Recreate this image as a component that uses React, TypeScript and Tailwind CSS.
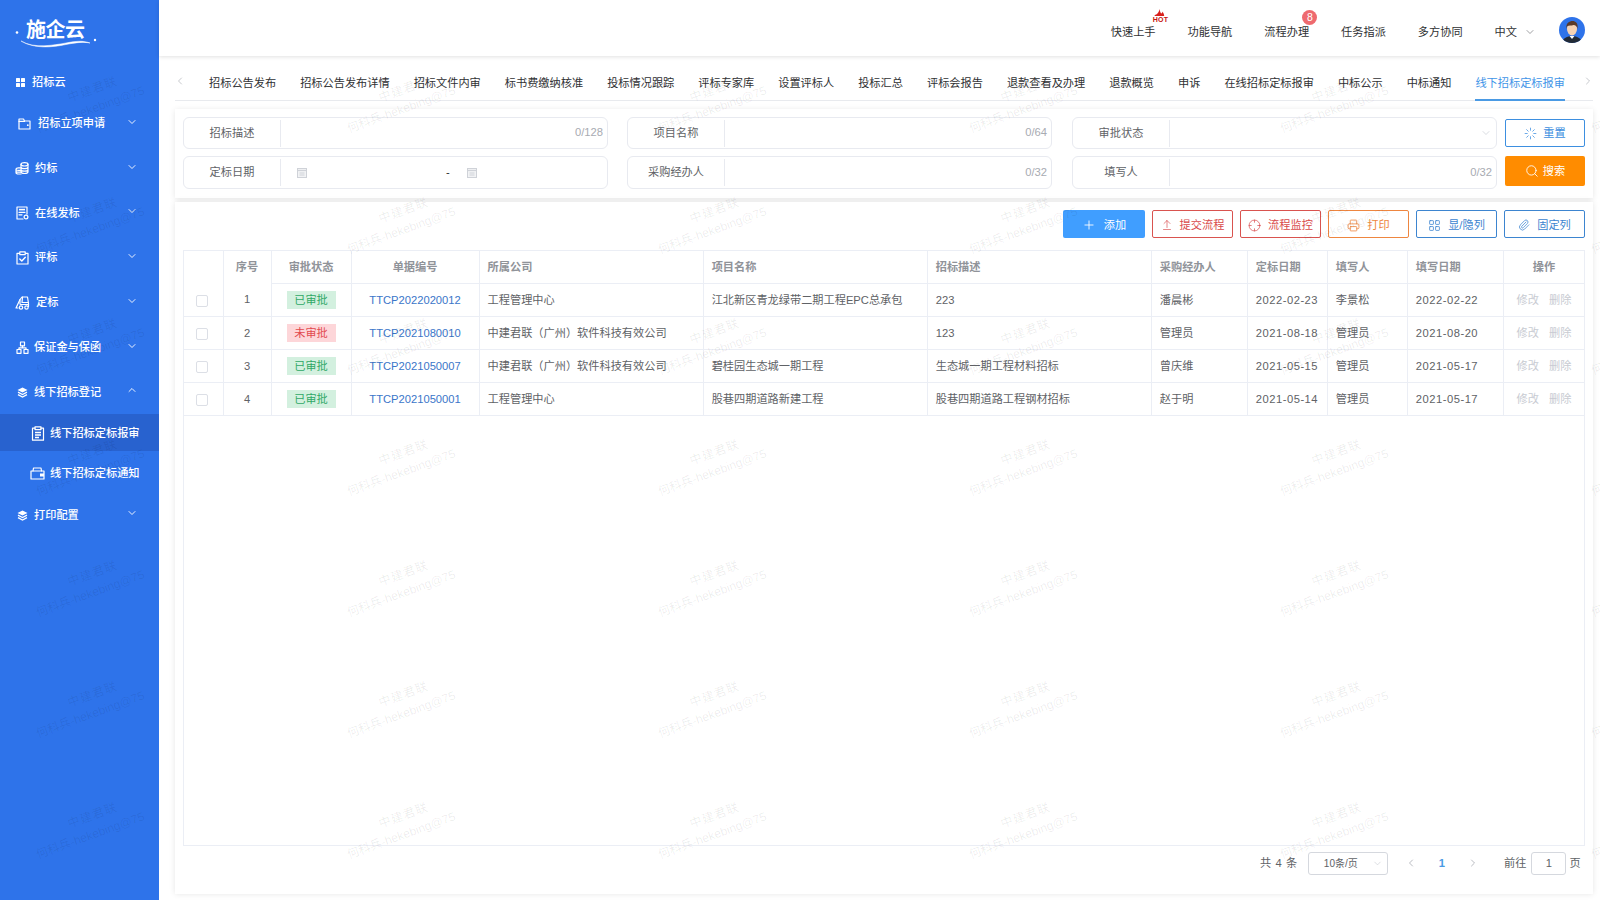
import React from "react";
import {
  ChevronDown, ChevronUp, ChevronLeft, ChevronRight, Plus, ArrowUpFromLine, Crosshair, Printer, LayoutGrid, Paperclip, Search, Loader,
} from "lucide-react";

const FONT = "font-['Liberation_Sans','Noto_Sans_CJK_SC',sans-serif]";

function Cal() {
  return (
    <svg width="10" height="10" viewBox="0 0 10 10" className="shrink-0">
      <rect x="0.5" y="0.5" width="9" height="9" fill="#f2f3f5" stroke="#cfd2d8" />
      <path d="M0.500 2.500h9" stroke="#cfd2d8" strokeWidth="1.2" />
      <path d="M2.500 5h5M2.500 7h5" stroke="#cfd2d8" strokeWidth="1" />
    </svg>
  );
}

function Grid4() {
  return (
    <svg width="9" height="9" viewBox="0 0 9 9" className="shrink-0">
      <rect x="0" y="0" width="4" height="4" rx="0.5" fill="#fff" />
      <rect x="5" y="0" width="4" height="4" rx="0.5" fill="#fff" />
      <rect x="0" y="5" width="4" height="4" rx="0.5" fill="#fff" />
      <rect x="5" y="5" width="4" height="4" rx="0.5" fill="#fff" />
    </svg>
  );
}

const stroke = { fill: "none", stroke: "#fff", strokeWidth: 1.2, strokeLinejoin: "round" as const, strokeLinecap: "round" as const };

function IFolder() {
  return (
    <svg width="13" height="12" viewBox="0 0 13 12" className="shrink-0">
      <path d="M1 1h4.500l1 2H12v8H1z" {...stroke} />
      <path d="M1 3.400h5.500" {...stroke} />
      <circle cx="9.800" cy="7.200" r="0.900" fill="#fff" />
    </svg>
  );
}

function ICoins() {
  return (
    <svg width="14" height="13" viewBox="0 0 14 13" className="shrink-0">
      <ellipse cx="9.500" cy="2.300" rx="3.500" ry="1.700" {...stroke} />
      <path d="M6 2.300v7.500c0 .9 1.600 1.700 3.500 1.700s3.500-.8 3.500-1.700V2.300M6 5c0 .9 1.600 1.700 3.500 1.700S13 5.900 13 5M6 7.500c0 .9 1.600 1.700 3.500 1.700S13 8.400 13 7.500" {...stroke} />
      <path d="M6 5.800H3.500C2 5.800 1 6.500 1 7.300v3.200c0 .9 1.100 1.500 2.500 1.500H6M1 8.900c0 .8 1.100 1.300 2.500 1.300H6M1 7.300c0 .7 1.100 1.100 2.500 1.100H6" {...stroke} />
    </svg>
  );
}

function IDoc() {
  return (
    <svg width="13" height="14" viewBox="0 0 13 14" className="shrink-0">
      <path d="M7 13H1V1h10v7" {...stroke} />
      <path d="M3 3.600h6" stroke="#fff" strokeWidth="1.600" />
      <path d="M3 6.300h6M3 8.800h3" {...stroke} />
      <circle cx="10" cy="11" r="1.900" {...stroke} />
    </svg>
  );
}

function ICheck() {
  return (
    <svg width="13" height="14" viewBox="0 0 13 14" className="shrink-0">
      <path d="M3.500 2.300H1V13h11V2.300H9.500" {...stroke} />
      <rect x="3.800" y="0.800" width="5.400" height="2.800" {...stroke} />
      <path d="M3.800 8l2 2 3.500-3.800" {...stroke} strokeWidth={1.4} />
    </svg>
  );
}

function IFork() {
  return (
    <svg width="17" height="14" viewBox="0 0 17 14" className="shrink-0">
      <path d="M5 8V3.500L7 1h5.500l1 6.500v3" {...stroke} />
      <path d="M7.500 1.200L7 6.500h6.200" {...stroke} />
      <path d="M5 3.500L1 12h2M5.500 8.500h8" {...stroke} />
      <circle cx="6" cy="11.500" r="1.700" {...stroke} />
      <circle cx="11.500" cy="11.500" r="1.700" {...stroke} />
    </svg>
  );
}

function INet() {
  return (
    <svg width="13" height="13" viewBox="0 0 13 13" className="shrink-0">
      <rect x="4.500" y="1" width="4" height="3.800" {...stroke} />
      <rect x="1" y="8.500" width="4" height="3.800" {...stroke} />
      <rect x="8" y="8.500" width="4" height="3.800" {...stroke} />
      <path d="M6.500 4.800v2H3v1.700M6.500 6.800H10v1.700" {...stroke} />
    </svg>
  );
}

function ILayers() {
  return (
    <svg width="11" height="11" viewBox="0 0 11 11" className="shrink-0">
      <path d="M5.500 0.500L10.500 3 5.500 5.500 0.500 3z" fill="#fff" />
      <path d="M1 5.200l4.500 2.300L10 5.200M1 7.600l4.500 2.400L10 7.600" fill="none" stroke="#fff" strokeWidth="1.300" />
    </svg>
  );
}

function IClip() {
  return (
    <svg width="14" height="15" viewBox="0 0 14 15" className="shrink-0">
      <path d="M4 2.200H1.500v12h11v-12H10" {...stroke} />
      <rect x="4" y="0.800" width="6" height="2.800" {...stroke} />
      <path d="M4 6.500h6M4 9h6M4 11.500h4" stroke="#fff" strokeWidth="1.300" />
    </svg>
  );
}

function IWallet() {
  return (
    <svg width="15" height="13" viewBox="0 0 15 13" className="shrink-0">
      <path d="M1 4h13v8H1z" {...stroke} />
      <path d="M3 4l.5-3h7.500l.5 3" {...stroke} />
      <rect x="10" y="6.500" width="4" height="3" fill="#fff" />
    </svg>
  );
}

function MenuRow({ icon, label, up, cls }: { icon: React.ReactNode; label: string; up?: boolean; cls: string }) {
  return (
    <div className={`flex items-center relative text-white font-medium ${cls}`}>
      {icon}
      <span className="whitespace-nowrap">{label}</span>
      <span className="absolute left-[126px] top-1/2 -translate-y-[8px]">
        {up ? <ChevronUp size={12} strokeWidth={1.8} /> : <ChevronDown size={12} strokeWidth={1.8} />}
      </span>
    </div>
  );
}

function Sidebar() {
  return (
    <aside className="w-[159px] shrink-0 bg-[#2e73ea] text-[11.2px] text-white">
      <div className="h-[63px] relative flex items-start pt-[16px] pl-[26px]">
        <span className="text-[20px] leading-[28px] font-bold tracking-[-0.5px] text-white">施企云</span>
        <svg className="absolute left-[14px] top-[28px]" width="84" height="20" viewBox="0 0 84 20">
          <circle cx="3" cy="4.500" r="1.300" fill="#fff" />
          <circle cx="81" cy="12" r="1.200" fill="#fff" />
          <path d="M7 13 C 20 21, 40 17, 52 15 C 60 13.500, 68 12, 76 15 C 68 13.500, 60 15, 52 16.500 C 38 19.500, 20 21, 7 13Z" fill="#fff" stroke="#fff" strokeWidth="0.500" />
        </svg>
      </div>
      <div className="h-[38px] flex items-center pl-[16px] gap-[7px] font-medium">
        <Grid4 />
        <span>招标云</span>
      </div>
      <MenuRow cls="h-[45px] pl-[18px] gap-[7px]" icon={<IFolder />} label="招标立项申请" />
      <MenuRow cls="h-[45px] pl-[15px] gap-[6px]" icon={<ICoins />} label="约标" />
      <MenuRow cls="h-[44px] pl-[16px] gap-[6px]" icon={<IDoc />} label="在线发标" />
      <MenuRow cls="h-[45px] pl-[16px] gap-[6px]" icon={<ICheck />} label="评标" />
      <MenuRow cls="h-[45px] pl-[15px] gap-[4px]" icon={<IFork />} label="定标" />
      <MenuRow cls="h-[45px] pl-[16px] gap-[5px]" icon={<INet />} label="保证金与保函" />
      <MenuRow up cls="h-[44px] pl-[17px] gap-[6px]" icon={<ILayers />} label="线下招标登记" />
      <div className="h-[37px] bg-[#2862cf] flex items-center pl-[31px] pt-[2px] gap-[5px] font-medium">
        <IClip />
        <span>线下招标定标报审</span>
      </div>
      <div className="h-[44px] flex items-center pl-[30px] gap-[5px] font-medium">
        <IWallet />
        <span>线下招标定标通知</span>
      </div>
      <MenuRow cls="h-[40px] pl-[17px] gap-[6px]" icon={<ILayers />} label="打印配置" />
    </aside>
  );
}

function Avatar() {
  return (
    <svg width="26" height="26" viewBox="0 0 26 26" className="shrink-0">
      <defs>
        <clipPath id="av"><circle cx="13" cy="13" r="13" /></clipPath>
      </defs>
      <g clipPath="url(#av)">
        <rect width="26" height="26" fill="#2e73ea" />
        <path d="M3 26c1-5 5-7 10-7s9 2 10 7z" fill="#222a36" />
        <path d="M10.500 19l2.500 3 2.500-3z" fill="#fff" />
        <ellipse cx="13" cy="12" rx="5" ry="6.500" fill="#f6d3b5" />
        <path d="M7.500 12c-1-6 3-8 6-8s6 2 5 8c-.5-3-2-4-4-4-2 .8-5 .5-6 1-.6.6-.8 2-1 3z" fill="#5a3a2a" />
      </g>
    </svg>
  );
}

function Header() {
  const items = ["快速上手", "功能导航", "流程办理", "任务指派", "多方协同"];
  return (
    <header className="h-[56px] shrink-0 bg-white shadow-[0_1px_4px_rgba(0,0,0,0.12)] flex items-center justify-end pr-[15px] text-[11.2px] text-[#303133] relative z-10">
      <div className="flex items-center gap-[32px] pt-[9px]">
        {items.map((t, i) => (
          <div key={t} className="relative whitespace-nowrap leading-[16px]">
            {t}
            {i === 0 && (
              <div className="absolute left-[40px] -top-[15px] w-[20px] h-[16px]">
                <svg width="20" height="13" viewBox="0 0 20 13" className="absolute left-0 top-0">
                  <path d="M8.500 0c.4 2.500 1 3.500 1.600 4.600C11 4 11.500 3.400 11.500 2.500c1 1.500 1.700 3 1.700 4.500H3.500C3.500 6 5 5.500 6 5c1.200-1 2.200-3 2.500-5z" fill="#d8201c" />
                </svg>
                <span className="absolute left-[2px] top-[7px] text-[7px] leading-[7px] font-bold text-[#c81410] tracking-[0.2px]">HOT</span>
              </div>
            )}
            {i === 2 && (
              <span className="absolute left-[38px] -top-[14px] w-[15px] h-[15px] rounded-full bg-[#ee6a6f] text-white text-[10.500px] leading-[15px] text-center">8</span>
            )}
          </div>
        ))}
        <div className="flex items-center gap-[7px] whitespace-nowrap">
          <span>中文</span>
          <ChevronDown size={12} strokeWidth={1.2} className="text-[#606266]" />
        </div>
      </div>
      <div className="ml-[23px] mt-[3px]"><Avatar /></div>
    </header>
  );
}

function Tabs() {
  const tabs = ["招标公告发布", "招标公告发布详情", "招标文件内审", "标书费缴纳核准", "投标情况跟踪", "评标专家库", "设置评标人", "投标汇总", "评标会报告", "退款查看及办理", "退款概览", "申诉", "在线招标定标报审", "中标公示", "中标通知"];
  return (
    <div className="h-[45px] shrink-0 ml-[16px] mr-[7px] flex items-stretch border-b border-[#e8eaee] text-[11.2px] text-[#303133] relative">
      <ChevronLeft size={12} strokeWidth={1.3} className="absolute left-[-1px] top-[19px] text-[#a8abb2]" />
      <div className="pl-[34px] flex gap-[24px] items-stretch">
        {tabs.map((t) => (
          <div key={t} className="whitespace-nowrap pt-[19px]">{t}</div>
        ))}
        <div className="whitespace-nowrap pt-[19px] text-[#3f95e8] border-b-[2px] border-[#4a9ae4] h-[45px]">线下招标定标报审</div>
      </div>
      <ChevronRight size={12} strokeWidth={1.3} className="absolute -right-[1px] top-[19px] text-[#a8abb2]" />
    </div>
  );
}

function Field({ label, children, cls }: { label: string; children: React.ReactNode; cls: string }) {
  return (
    <div className={`w-[425px] border border-[#e8eaf0] rounded-[6px] flex items-center bg-white ${cls}`}>
      <div className="w-[97px] h-[27px] shrink-0 border-r border-[#e8eaf0] text-center leading-[27px] text-[#606266]">{label}</div>
      <div className="flex-1 flex items-center px-[4px] text-[#a8abb2] -mt-[1px]">{children}</div>
    </div>
  );
}

function Filter() {
  return (
    <section className="ml-[16px] mr-[7px] mt-[8px] h-[89px] shrink-0 bg-white shadow-[0_1px_6px_rgba(0,0,0,0.1)] pl-[8px] pr-[8px] pt-[8px] text-[11.2px] flex flex-col gap-[7px]">
      <div className="flex items-start gap-[19px]">
        <Field cls="h-[32px]" label="招标描述"><span className="ml-auto">0/128</span></Field>
        <Field cls="h-[32px]" label="项目名称"><span className="ml-auto">0/64</span></Field>
        <Field cls="h-[32px] ml-[1px]" label="审批状态"><ChevronDown size={12} strokeWidth={1.2} className="ml-auto text-[#c0c4cc]" /></Field>
        <button className="w-[80px] h-[28px] mt-[2px] -ml-[11px] rounded-[2px] border border-[#3d8fe0] text-[#3d8fe0] flex items-center justify-center gap-[6px] bg-white">
          <Loader size={13} strokeWidth={1.4} />
          <span>重置</span>
        </button>
      </div>
      <div className="flex items-start gap-[19px]">
        <div className="w-[425px] h-[33px] border border-[#e8eaf0] rounded-[6px] flex items-center bg-white">
          <div className="w-[97px] h-[27px] shrink-0 border-r border-[#e8eaf0] text-center leading-[27px] text-[#606266]">定标日期</div>
          <div className="ml-[16px]"><Cal /></div>
          <span className="ml-[139px] text-[#303133]">-</span>
          <div className="ml-[17px]"><Cal /></div>
        </div>
        <Field cls="h-[33px]" label="采购经办人"><span className="ml-auto">0/32</span></Field>
        <Field cls="h-[33px] ml-[1px]" label="填写人"><span className="ml-auto">0/32</span></Field>
        <button className="w-[80px] h-[30px] -ml-[11px] rounded-[2px] bg-[#ff8c00] text-white flex items-center justify-center gap-[4px]">
          <Search size={14} strokeWidth={1.5} />
          <span>搜索</span>
        </button>
      </div>
    </section>
  );
}

const rows = [
  ["1", "已审批", "TTCP2022020012", "工程管理中心", "江北新区青龙绿带二期工程EPC总承包", "223", "潘晨彬", "2022-02-23", "李景松", "2022-02-22"],
  ["2", "未审批", "TTCP2021080010", "中建君联（广州）软件科技有效公司", "", "123", "管理员", "2021-08-18", "管理员", "2021-08-20"],
  ["3", "已审批", "TTCP2021050007", "中建君联（广州）软件科技有效公司", "碧桂园生态城一期工程", "生态城一期工程材料招标", "曾庆维", "2021-05-15", "管理员", "2021-05-17"],
  ["4", "已审批", "TTCP2021050001", "工程管理中心", "股巷四期道路新建工程", "股巷四期道路工程钢材招标", "赵于明", "2021-05-14", "管理员", "2021-05-17"],
];

function ActionBtn({ cls, icon, label }: { cls: string; icon: React.ReactNode; label: string }) {
  return (
    <button className={`w-[81px] h-[28px] pt-[2px] rounded-[2px] border bg-white flex items-center justify-center gap-[7px] ${cls}`}>
      {icon}
      <span>{label}</span>
    </button>
  );
}

function TableCard() {
  const th = "h-[32px] border-r border-b border-[#ebeef5] font-bold text-[#909399] px-[8px] pt-[1px]";
  const base = "h-[33px] border-r border-b border-[#ebeef5] px-[8px] pt-[1px]";
  const td = `${base} text-[#606266]`;
  return (
    <section className="ml-[16px] mr-[7px] mt-[4px] flex-1 mb-[6px] bg-white shadow-[0_0_6px_rgba(0,0,0,0.1)] pl-[8px] pr-[8px] pt-[8px] text-[11.2px] flex flex-col min-h-0">
      <div className="flex justify-end gap-[7px] shrink-0">
        <button className="w-[82px] h-[28px] pt-[2px] rounded-[2px] bg-[#409eff] text-white flex items-center justify-center gap-[8px]">
          <Plus size={14} strokeWidth={1.5} />
          <span>添加</span>
        </button>
        <ActionBtn cls="border-[#d9534f] text-[#d9484a]" icon={<ArrowUpFromLine size={12} strokeWidth={1.3} />} label="提交流程" />
        <ActionBtn cls="border-[#d9534f] text-[#d9484a]" icon={<Crosshair size={13} strokeWidth={1.3} />} label="流程监控" />
        <ActionBtn cls="border-[#ee8640] text-[#ee8640]" icon={<Printer size={13} strokeWidth={1.5} />} label="打印" />
        <ActionBtn cls="border-[#3d85d0] text-[#3d85d0]" icon={<LayoutGrid size={13} strokeWidth={1.5} />} label="显/隐列" />
        <ActionBtn cls="border-[#3d85d0] text-[#3d85d0]" icon={<Paperclip size={12} strokeWidth={1.5} />} label="固定列" />
      </div>
      <div className="mt-[12px] h-[596px] border border-[#ebeef5] shrink-0 overflow-hidden">
        <table className="w-[1401px] table-fixed border-collapse">
          <colgroup>
            <col className="w-[39px]" />
            <col className="w-[48px]" />
            <col className="w-[80px]" />
            <col className="w-[128px]" />
            <col className="w-[224px]" />
            <col className="w-[224px]" />
            <col className="w-[224px]" />
            <col className="w-[96px]" />
            <col className="w-[80px]" />
            <col className="w-[80px]" />
            <col className="w-[96px]" />
            <col className="w-[81px]" />
          </colgroup>
          <thead>
            <tr>
              <th className="h-[32px] border-r border-[#ebeef5]"></th>
              <th className="h-[32px] border-r border-[#ebeef5] font-bold text-[#909399] pt-[1px]">序号</th>
              <th className={`${th} text-center`}>审批状态</th>
              <th className={`${th} text-center`}>单据编号</th>
              <th className={`${th} text-left`}>所属公司</th>
              <th className={`${th} text-left`}>项目名称</th>
              <th className={`${th} text-left`}>招标描述</th>
              <th className={`${th} text-left`}>采购经办人</th>
              <th className={`${th} text-left`}>定标日期</th>
              <th className={`${th} text-left`}>填写人</th>
              <th className={`${th} text-left`}>填写日期</th>
              <th className={`${th} text-center`}>操作</th>
            </tr>
          </thead>
          <tbody>
            {rows.map((r) => (
              <tr key={r[0]}>
                <td className={`${td} !px-0 !pl-[12px]`}>
                  <span className="block w-[12px] h-[12px] border border-[#dcdfe6] rounded-[2px] bg-white mt-[2px]"></span>
                </td>
                <td className={`${td} text-center`}>{r[0]}</td>
                <td className={`${td} text-center`}>
                  <span className={`inline-block w-[49px] h-[18px] leading-[18px] ${r[1] === "已审批" ? "bg-[#d3f0df] text-[#2fa866]" : "bg-[#fdd6d9] text-[#e2494e]"}`}>{r[1]}</span>
                </td>
                <td className={`${base} text-center text-[#3b76c9]`}>{r[2]}</td>
                <td className={td}>{r[3]}</td>
                <td className={td}>{r[4]}</td>
                <td className={td}>{r[5]}</td>
                <td className={td}>{r[6]}</td>
                <td className={`${td} tracking-[0.5px]`}>{r[7]}</td>
                <td className={td}>{r[8]}</td>
                <td className={`${td} tracking-[0.5px]`}>{r[9]}</td>
                <td className={`${base} text-center text-[#c8cbd2] whitespace-nowrap`}>
                  <span className="mr-[10px]">修改</span><span>删除</span>
                </td>
              </tr>
            ))}
          </tbody>
        </table>
      </div>
      <div className="mt-[5px] h-[24px] flex items-center text-[#606266] shrink-0">
        <span className="ml-[1077px] whitespace-nowrap tracking-[0.6px]">共 4 条</span>
        <div className="ml-[10px] w-[80px] h-[23px] border border-[#d5d8de] rounded-[3px] flex items-center pl-[15px] pr-[4px] text-[10px] text-[#606266]">
          <span>10条/页</span>
          <ChevronDown size={11} strokeWidth={1.2} className="ml-auto text-[#c0c4cc]" />
        </div>
        <ChevronLeft size={12} strokeWidth={1.6} className="ml-[17px] text-[#a8abb2]" />
        <span className="ml-[22px] font-bold text-[#4a9ae4]">1</span>
        <ChevronRight size={12} strokeWidth={1.6} className="ml-[22px] text-[#a8abb2]" />
        <span className="ml-[25px] whitespace-nowrap">前往</span>
        <div className="ml-[5px] w-[35px] h-[23px] border border-[#d5d8de] rounded-[3px] text-center leading-[21px]">1</div>
        <span className="ml-[3px]">页</span>
      </div>
    </section>
  );
}

function Watermark() {
  const tiles = Array.from({ length: 48 });
  return (
    <div className="absolute left-[-68px] top-[40px] w-[1866px] h-[860px] flex flex-wrap content-start pointer-events-none z-20 overflow-hidden">
      {tiles.map((_, i) => (
        <div key={i} className="w-[311px] h-[121px] flex items-center justify-center">
          <div className="-rotate-[20deg] text-center text-[12px] leading-[18px] text-[rgba(0,0,0,0.08)] whitespace-nowrap">
            <div className="tracking-[1px] pl-[18px]">中建君联</div>
            <div>何科兵-hekebing@75</div>
          </div>
        </div>
      ))}
    </div>
  );
}

export default function App() {
  return (
    <div className={`relative w-[1600px] h-[900px] overflow-hidden flex bg-white ${FONT}`}>
      <Sidebar />
      <main className="flex-1 min-w-0 flex flex-col">
        <Header />
        <Tabs />
        <Filter />
        <TableCard />
      </main>
      <Watermark />
    </div>
  );
}
